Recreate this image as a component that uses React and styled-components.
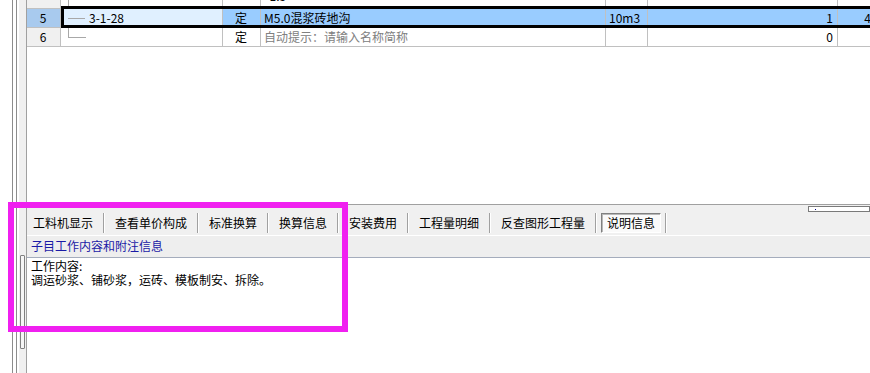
import React from "react";
import styled, { createGlobalStyle, css } from "styled-components";

const GlobalStyle = createGlobalStyle`
  html, body {
    margin: 0;
    padding: 0;
    background: #fff;
  }
  body {
    font-family: "Noto Sans CJK SC", "Noto Sans", sans-serif;
    font-size: 12px;
    color: #000;
  }
`;

const COLS = { num: 34, code: 162, type: 38, name: 345, unit: 42, qty: 190, last: 68 };

export default function App() {
  return (
    <>
      <GlobalStyle />
      <Screen>
        <Gutter>
          <Strip $w={12} $bg="#fff" />
          <Strip $w={1} $bg="#8c8c8c" />
          <Strip $w={3} $bg="#fff" />
          <Strip $w={1} $bg="#8c8c8c" />
          <Strip $w={2} $bg="#fff" />
          <Track $w={7} $bg="#f0f0f0">
            <Thumb />
          </Track>
          <Strip $w={1} $bg="#a0a0a0" />
        </Gutter>

        <Main>
          <GridArea>
            <Rows>
              <Row>
                <Cell $w={COLS.num} $bg="#f0f0f0" $align="center" />
                <Cell $w={COLS.code}>
                  <Branch $stem />
                </Cell>
                <Cell $w={COLS.type} $align="center" />
                <Cell $w={COLS.name} $top>*1.5</Cell>
                <Cell $w={COLS.unit} />
                <Cell $w={COLS.qty} $align="right" />
                <Cell $w={COLS.last} $align="right" />
              </Row>

              <Row>
                <Cell $w={COLS.num} $bg="#a8caee" $align="center">5</Cell>
                <Selected>
                  <Cell $w={COLS.code} $bg="#e0f0ff">
                    <Branch />
                    3-1-28
                  </Cell>
                  <Cell $w={COLS.type} $bg="#99ccff" $align="center">定</Cell>
                  <Cell $w={COLS.name} $bg="#99ccff">M5.0混浆砖地沟</Cell>
                  <Cell $w={COLS.unit} $bg="#99ccff">10m3</Cell>
                  <Cell $w={COLS.qty} $bg="#99ccff" $align="right">1</Cell>
                  <Cell $w={COLS.last} $bg="#99ccff" $align="right">433.92</Cell>
                </Selected>
              </Row>

              <Row>
                <Cell $w={COLS.num} $bg="#f0f0f0" $align="center">6</Cell>
                <Cell $w={COLS.code}>
                  <Branch $elbow />
                </Cell>
                <Cell $w={COLS.type} $align="center">定</Cell>
                <Cell $w={COLS.name} $muted>自动提示：请输入名称简称</Cell>
                <Cell $w={COLS.unit} />
                <Cell $w={COLS.qty} $align="right">0</Cell>
                <Cell $w={COLS.last} $align="right" />
              </Row>
            </Rows>
          </GridArea>

          <Panel>
            <TabBar>
              <Tabs>
                <Tab>工料机显示</Tab>
                <Sep />
                <Tab>查看单价构成</Tab>
                <Sep />
                <Tab>标准换算</Tab>
                <Sep />
                <Tab>换算信息</Tab>
                <Sep />
                <Tab>安装费用</Tab>
                <Sep />
                <Tab>工程量明细</Tab>
                <Sep />
                <Tab>反查图形工程量</Tab>
                <Sep />
                <Tab $active>说明信息</Tab>
                <Sep />
              </Tabs>
              <ScrollBox>
                <ScrollDot />
              </ScrollBox>
            </TabBar>

            <InfoHead>子目工作内容和附注信息</InfoHead>
            <InfoBody>
              <div>工作内容:</div>
              <div>调运砂浆、铺砂浆，运砖、模板制安、拆除。</div>
            </InfoBody>
          </Panel>
        </Main>

        <Highlight />
      </Screen>
    </>
  );
}

const Screen = styled.div`
  position: relative;
  display: flex;
  width: 870px;
  height: 373px;
  overflow: hidden;
  background: #fff;
`;

const Gutter = styled.div`
  display: flex;
  flex: none;
  height: 100%;
`;

const Strip = styled.div`
  flex: none;
  width: ${(p) => p.$w}px;
  background: ${(p) => p.$bg};
`;

const Track = styled(Strip)`
  display: flex;
  flex-direction: column;
  align-items: center;
`;

const Thumb = styled.div`
  margin-top: 255px;
  width: 3px;
  height: 92px;
  border: 1px solid #808080;
  border-radius: 1px;
  background: #f6f6f6;
`;

const Main = styled.div`
  flex: 1;
  min-width: 0;
  display: flex;
  flex-direction: column;
`;

const GridArea = styled.div`
  flex: none;
  height: 204px;
  overflow: hidden;
`;

const Rows = styled.div`
  margin-top: -10px;
`;

const Row = styled.div`
  display: flex;
  height: 19px;
`;

const Selected = styled.div`
  position: relative;
  display: flex;

  &::after {
    content: "";
    position: absolute;
    top: -3px;
    bottom: 0;
    left: 0;
    right: -20px;
    border: 3px solid #000;
    pointer-events: none;
  }
`;

const Cell = styled.div`
  flex: none;
  box-sizing: border-box;
  width: ${(p) => p.$w}px;
  height: 19px;
  padding: 0 4px 0 3px;
  display: flex;
  align-items: ${(p) => (p.$top ? "flex-start" : "center")};
  justify-content: ${(p) =>
    p.$align === "center" ? "center" : p.$align === "right" ? "flex-end" : "flex-start"};
  border-right: 1px solid #c0c0c0;
  border-bottom: 1px solid #c0c0c0;
  background: ${(p) => p.$bg || "#fff"};
  color: ${(p) => (p.$muted ? "#808080" : "#000")};
  line-height: ${(p) => (p.$top ? "12px" : "18px")};
  white-space: nowrap;
  overflow: hidden;
`;

const Branch = styled.span`
  flex: none;
  align-self: flex-start;
  margin: 0 4px 0 4px;
  width: ${(p) => (p.$stem ? 0 : 17)}px;
  height: ${(p) => (p.$stem ? 18 : 9)}px;
  border-left: ${(p) => (p.$stem || p.$elbow ? "1px solid #a8a8a8" : "none")};
  border-bottom: ${(p) => (p.$stem ? "none" : "1px solid #a8a8a8")};
`;

const Panel = styled.div`
  flex: 1;
  min-height: 0;
  display: flex;
  flex-direction: column;
  border-top: 1px solid #a0a0a0;
  background: #fff;
`;

const TabBar = styled.div`
  flex: none;
  display: flex;
  align-items: flex-start;
  height: 30px;
  background: #f0f0f0;
`;

const Tabs = styled.div`
  display: flex;
  align-items: center;
  margin-top: 8px;
`;

const Tab = styled.div`
  box-sizing: border-box;
  height: 20px;
  padding: 0 5px;
  display: flex;
  align-items: center;
  border: 1px solid transparent;
  line-height: 18px;
  white-space: nowrap;

  ${(p) =>
    p.$active &&
    css`
      border-color: #808080 #ffffff #ffffff #808080;
      background: #fafafa;
      box-shadow: inset 1px 1px 0 #b8b8b8;
    `}
`;

const Sep = styled.span`
  flex: none;
  width: 0;
  height: 20px;
  margin: 0 4px;
  border-left: 1px solid #a0a0a0;
  border-right: 1px solid #fff;
`;

const ScrollBox = styled.div`
  flex: none;
  margin: 1px 0 0 auto;
  width: 60px;
  height: 4px;
  border: 1px solid #7a7a7a;
  background: #fff;
  display: flex;
  align-items: flex-start;
`;

const ScrollDot = styled.span`
  margin: 2px 0 0 6px;
  width: 1px;
  height: 1px;
  background: #000080;
`;

const InfoHead = styled.div`
  flex: none;
  box-sizing: border-box;
  margin-top: 1px;
  height: 22px;
  padding: 0 0 2px 4px;
  display: flex;
  align-items: center;
  background: #eeeeee;
  border-bottom: 1px solid #a4acbc;
  color: #1a1aa6;
  white-space: nowrap;
`;

const InfoBody = styled.div`
  flex: 1;
  padding: 1px 4px;
  line-height: 14px;
  white-space: nowrap;
`;

const Highlight = styled.div`
  position: absolute;
  left: 8px;
  top: 202px;
  width: 340px;
  height: 130px;
  box-sizing: border-box;
  border: 6px solid #f020f0;
  pointer-events: none;
`;
